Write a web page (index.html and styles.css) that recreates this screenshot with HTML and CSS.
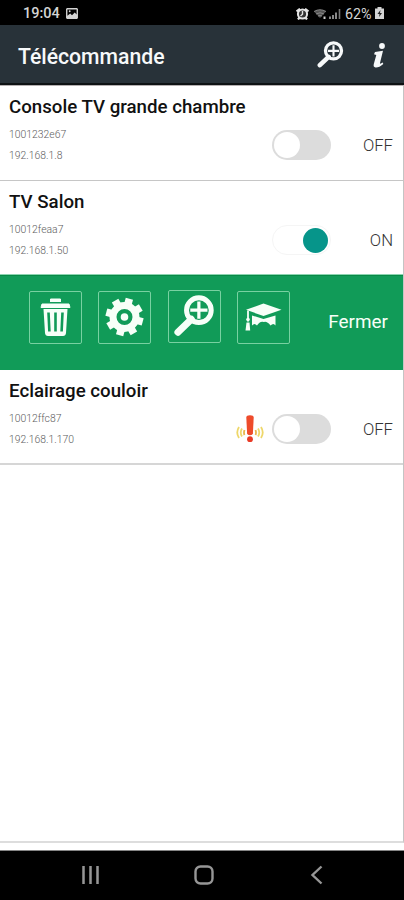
FILE: index.html
```html
<!DOCTYPE html>
<html lang="fr">
<head>
<meta charset="utf-8">
<title>Télécommande</title>
<link rel="stylesheet" href="styles.css">
</head>
<body>
<svg class="defs" width="0" height="0">
  <symbol id="search-plus" viewBox="0 0 40 40">
    <path d="M18 24 5.500 36" fill="none" stroke="currentColor" stroke-width="6.500" stroke-linecap="round"/>
    <circle cx="25" cy="15.500" r="11.500" fill="none" stroke="currentColor" stroke-width="4.600"/>
    <path d="M25 7.500v16M17 15.500h16" fill="none" stroke="currentColor" stroke-width="3"/>
  </symbol>
</svg>
<div class="phone">
  <header class="status">
    <span class="clock">19:04</span>
    <svg class="photo" viewBox="0 0 13 12"><path fill-rule="evenodd" fill="currentColor" d="M1 0h11l1 1v10l-1 1H1l-1-1V1zM1.500 1.500v7l3-2.500 2 2 3-3 2 2V1.500z"/><circle cx="4" cy="3.500" r="1" fill="currentColor"/></svg>
    <span class="spacer"></span>
    <svg class="alarm" viewBox="0 0 13 12"><path d="M.5 3.500 4 .8M12.500 3.500 9 .8M2 11.500l1.500-2M11 11.500l-1.500-2" stroke="currentColor" stroke-width="2.200"/><circle cx="6.500" cy="6" r="4.600" fill="#333" stroke="currentColor" stroke-width="2"/><path d="M6.500 3v3.300L4.500 8" fill="none" stroke="currentColor" stroke-width="1.400"/></svg>
    <svg class="wifi" viewBox="0 0 15 12"><path d="M0 3.500Q6 0 12 3.500L6 10z" fill="#555"/><path d="M0 3.500Q6 0 12 3.500M2 6q4-2.500 8 0M4 8q2-1 4 0" fill="none" stroke="#888"/><path d="M10.500 8.500v2.500" stroke="#ccc" stroke-width="2"/></svg>
    <svg class="signal" viewBox="0 0 12 12"><path d="M1 11V8.500M4 11V7M7 11V4.500" stroke="#aaa" stroke-width="1.600"/><path d="M10.500 11V1" stroke="#777" stroke-width="1.600"/></svg>
    <span class="percent">62%</span>
    <svg class="battery" viewBox="0 0 9 12"><path d="M2.500 0h4v1.500H9V12H0V1.500h2.500z" fill="currentColor"/><path d="M5.500 3 2.500 7h2L4 10l3-4H5z" fill="#222"/></svg>
  </header>
  <div class="appbar">
    <h1 class="title">Télécommande</h1>
    <svg class="find"><use href="#search-plus"/></svg>
    <svg class="info" viewBox="0 0 14 25"><circle cx="10" cy="3" r="2.900" fill="currentColor"/><path d="M3 9 11 7.700 8 20q-.2 1.500 2.700-.5l.6 1.500Q7 24.800 3.500 24.500 1 24 1.800 21L4.300 12 2 11.300z" fill="currentColor"/></svg>
  </div>
  <main class="list">
    <section class="row">
      <div class="device"><h2 class="name">Console TV grande chambre</h2><p class="meta">1001232e67</p><p class="meta">192.168.1.8</p></div>
      <div class="control"><span class="toggle"><i class="knob"></i></span><span class="state">OFF</span></div>
    </section>
    <section class="row">
      <div class="device"><h2 class="name">TV Salon</h2><p class="meta">10012feaa7</p><p class="meta">192.168.1.50</p></div>
      <div class="control"><span class="toggle on"><i class="knob"></i></span><span class="state">ON</span></div>
    </section>
    <section class="actions">
      <span class="action"><svg viewBox="0 0 51 51"><path d="M20.500 10V7h10v3M12 12h27l1 3.500H11z" fill="currentColor" stroke="currentColor" stroke-linejoin="round"/><path d="M13.500 17h24L36 41q-.3 3-3 3H18q-2.700 0-3-3z" fill="currentColor"/><path d="m18.500 20.500.9 19M25.500 20.500v19M32.500 20.500l-.9 19" stroke="#119b58" stroke-width="2.600"/></svg></span>
      <span class="action"><svg viewBox="0 0 51 51"><circle cx="25.500" cy="25" r="11.500" fill="none" stroke="currentColor" stroke-width="7"/><g stroke="currentColor" stroke-width="7.500"><path id="tooth" d="M25.500 12V6.200" transform="rotate(15 25.500 25)"/><use href="#tooth" transform="rotate(45 25.500 25)"/><use href="#tooth" transform="rotate(90 25.500 25)"/><use href="#tooth" transform="rotate(135 25.500 25)"/><use href="#tooth" transform="rotate(180 25.500 25)"/><use href="#tooth" transform="rotate(225 25.500 25)"/><use href="#tooth" transform="rotate(270 25.500 25)"/><use href="#tooth" transform="rotate(315 25.500 25)"/></g><circle cx="25.500" cy="25" r="3.800" fill="currentColor"/></svg></span>
      <span class="action raised"><svg viewBox="0 0 51 51"><use href="#search-plus" x="3" y="2.500" width="43" height="43"/></svg></span>
      <span class="action"><svg viewBox="0 0 51 51"><path d="M8 17.800 25.500 11.500 43.500 17.800 25.500 24z" fill="currentColor"/><path d="m14 23.500 11.500 3.500 12-3.500v10q-2-3-5 0-3.500-4.500-6.500-3.500-4-1.500-7 3.500-2.500-3-5 0z" fill="currentColor"/><path d="M10 18.500v11" stroke="currentColor" stroke-width="1.800"/><circle cx="10" cy="27.500" r="1.800" fill="currentColor"/><path d="M8.500 30.500h3l.7 8H7.500z" fill="currentColor"/></svg></span>
      <span class="close">Fermer</span>
    </section>
    <section class="row">
      <div class="device"><h2 class="name">Eclairage couloir</h2><p class="meta">10012ffc87</p><p class="meta">192.168.1.170</p></div>
      <div class="control"><svg class="alert" viewBox="0 0 28 28"><g fill="none" stroke="#eed76a" stroke-width="1.800"><path d="M3 12q-3.500 5.500 0 11M6 13.500q-2.500 4 0 8M25 12q3.500 5.500 0 11M22 13.500q2.500 4 0 8"/><path d="M8.500 15q-1 3 0 5M19.500 15q1 3 0 5" stroke="#e9b44c"/></g><path d="M10.300 2.500q0-2.200 3.700-2.200t3.700 2.200l-.8 16q-.2 1.800-2.900 1.800t-2.900-1.800z" fill="#ee4b2b"/><circle cx="14" cy="24.200" r="2.900" fill="#e93a25"/></svg><span class="toggle"><i class="knob"></i></span><span class="state">OFF</span></div>
    </section>
  </main>
  <nav class="nav">
    <svg viewBox="0 0 20 20"><path d="M2.500 1v18M9.500 1v18M16.500 1v18" stroke="currentColor" stroke-width="2.500"/></svg>
    <svg viewBox="0 0 20 20"><rect x="1.500" y="1.500" width="17" height="17" rx="5" fill="none" stroke="currentColor" stroke-width="2.400"/></svg>
    <svg viewBox="0 0 20 20"><path d="M14.500 1.500 5.500 10l9 8.500" fill="none" stroke="currentColor" stroke-width="2.400"/></svg>
  </nav>
</div>
</body>
</html>
```
FILE: styles.css
```css
* { box-sizing: border-box; }
body { margin: 0; background: #fff; font-family: Roboto, "Liberation Sans", sans-serif; }
h1, h2, p { margin: 0; }
svg { display: block; flex: none; }
.defs { position: absolute; }
.phone { width: 404px; height: 900px; display: flex; flex-direction: column; overflow: hidden; }
.status { height: 25px; flex: none; background: #000; color: #d4d4d4; display: flex; align-items: center; padding: 2px 20px 0 23px; font-size: 14.5px; font-weight: 500; }
.clock { width: 43px; }
.photo { width: 12px; height: 11px; }
.spacer { flex: 1; }
.alarm { width: 13px; height: 12px; margin-right: 5px; color: #e4e4e4; }
.wifi { width: 15px; height: 12px; }
.signal { width: 12px; height: 12px; margin-right: 4px; }
.percent { width: 28px; font-size: 14.3px; font-weight: 400; }
.battery { width: 9px; height: 12px; margin: 0 0 1px 2px; }
.appbar { height: 60px; flex: none; background: #283239; border-bottom: 2px solid #0d1113; color: #f7f9fa; display: flex; align-items: center; padding: 0 18px 0 18px; }
.title { flex: 1; font-size: 21.2px; line-height: 30px; font-weight: 500; padding-top: 5px; }
.find { width: 28px; height: 28px; margin: 0 28px 0 0; }
.find use { width: 28px; height: 28px; }
.info { width: 14px; height: 25px; margin: 2px 0 0; }
.list { height: 758px; flex: none; border: 1px solid; border-width: 1px 1px 2px 0; border-color: #b5b0b1 #c4c4c4 #ddd transparent; }
.row { height: 95px; display: flex; justify-content: space-between; border-bottom: 1px solid #c6c6c6; padding: 0 10px 0 9px; }
.row + .row { height: 94px; border-bottom-color: #8bd4b0; }
.actions + .row { border-bottom: 2px solid #d6d6d6; }
.device { padding-top: 9px; }
.name { color: #111; font-size: 18.7px; line-height: 24px; font-weight: 500; white-space: nowrap; }
.meta { color: #606060; font-size: 10.4px; line-height: 21px; font-weight: 300; }
.name + .meta { margin-top: 5px; }
.control { display: flex; align-items: center; height: 30px; margin-top: 44px; }
.toggle { width: 59px; height: 30px; border-radius: 15px; background: #dcdcdc; padding: 2px; }
.knob { display: block; width: 26px; height: 26px; border-radius: 50%; background: #fff; }
.toggle.on { background: #fff; border: 1px solid #f5f5f5; }
.toggle.on .knob { width: 25px; height: 25px; margin: -0.5px 0 0 28px; background: #06958a; }
.state { width: 62px; text-align: right; color: #333; font-size: 16.7px; font-weight: 300; }
.actions { height: 95px; background: #119b58; border-top: 1px solid #088946; color: #f7fff8; display: flex; padding: 15px 15px 0 28.5px; gap: 16.5px; }
.action { width: 53px; height: 53px; border: 1px solid #78d1a1; border-radius: 2px; }
.action svg { width: 51px; height: 51px; }
.raised { margin-top: -1px; }
.close { margin-left: auto; margin-top: 17px; line-height: 28px; font-size: 18.9px; }
.alert { width: 28px; height: 28px; margin-right: 8.5px; }
.nav { margin-top: 7px; flex: 1; background: #000; border-top: 1px solid #858585; color: #969696; display: flex; align-items: center; justify-content: space-between; padding: 0 77px 2px 81px; }
.nav svg { width: 20px; height: 20px; }
```
